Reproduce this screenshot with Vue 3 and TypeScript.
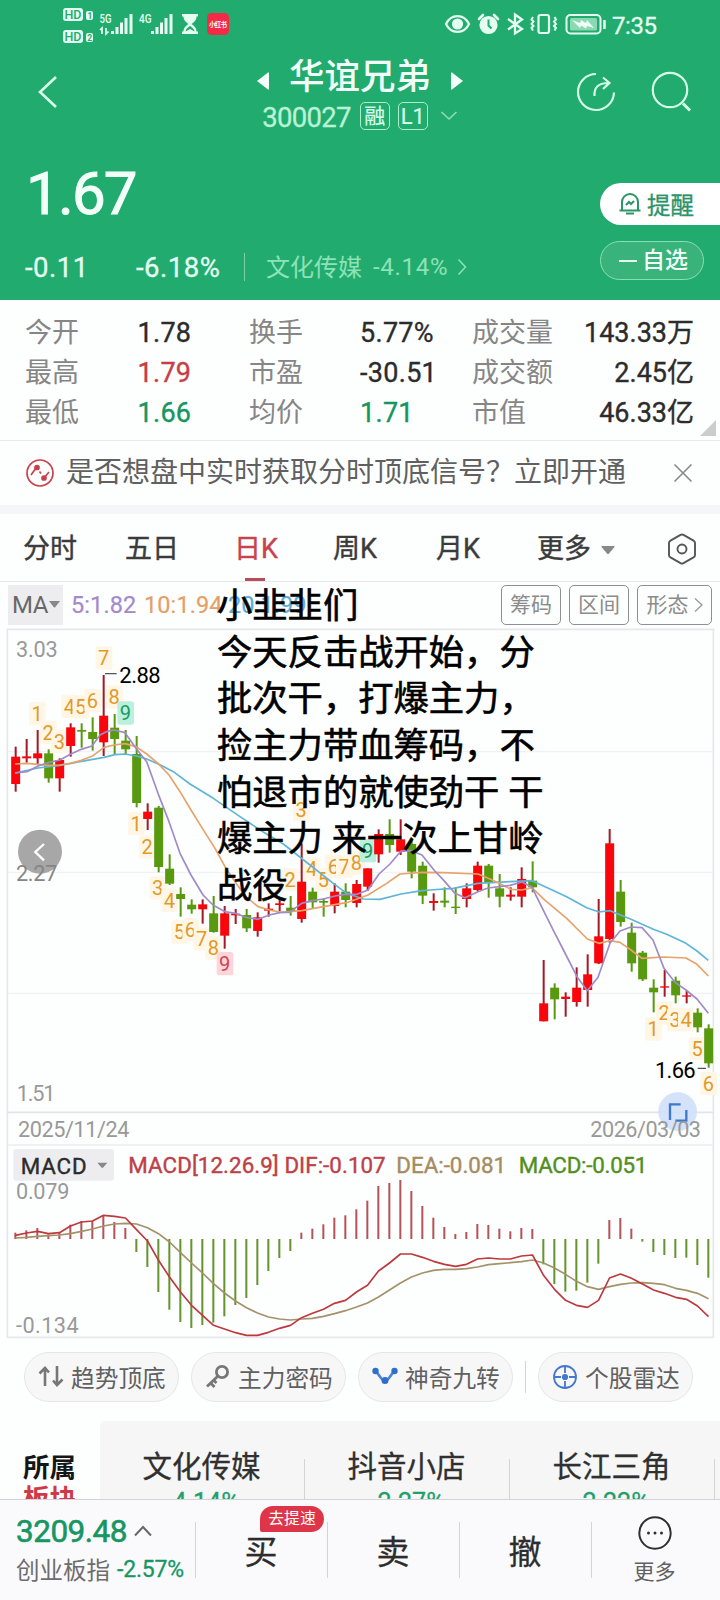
<script setup lang="ts">
type Candle = [up: number, high: number, top: number, bottom: number, low: number]
type Tag = [text: string, x: number, y: number, tone?: string]

// The chart is drawn on a grid of three units per pixel.
const X0 = 46.5
const STEP = 33
const ZERO = 1857
const cx = (i: number) => X0 + i * STEP

const candles: Candle[] = [
  [1, 380, 410, 492, 515], [1, 357, 409, 415, 428], [1, 330, 400, 415, 435], [0, 388, 400, 475, 488],
  [1, 415, 420, 475, 515], [1, 310, 322, 378, 410], [0, 310, 330, 335, 383], [0, 292, 336, 357, 392],
  [1, 165, 287, 367, 408], [0, 282, 323, 357, 402], [0, 330, 362, 388, 402], [0, 348, 402, 549, 562],
  [1, 550, 575, 597, 630], [0, 558, 563, 741, 757], [0, 703, 746, 791, 795], [0, 802, 822, 837, 890],
  [0, 838, 854, 868, 881], [1, 838, 853, 868, 911], [0, 828, 880, 936, 938], [1, 858, 880, 947, 986],
  [1, 867, 881, 886, 912], [0, 867, 885, 925, 936], [1, 877, 892, 933, 950], [1, 850, 866, 872, 890],
  [1, 837, 850, 855, 873], [0, 828, 863, 875, 887], [1, 670, 785, 897, 908], [0, 803, 815, 847, 865],
  [0, 835, 843, 848, 890], [1, 790, 815, 858, 880], [0, 790, 815, 840, 862], [1, 780, 792, 849, 862],
  [1, 745, 745, 800, 813], [1, 628, 642, 703, 728], [0, 598, 642, 675, 698], [1, 598, 658, 695, 705],
  [0, 662, 672, 755, 775], [0, 725, 737, 827, 852], [1, 820, 843, 849, 872], [0, 802, 842, 848, 862],
  [0, 802, 860, 864, 882], [1, 790, 805, 837, 862], [1, 725, 737, 810, 815], [0, 732, 737, 788, 833],
  [0, 762, 805, 830, 862], [1, 802, 824, 830, 842], [1, 742, 777, 830, 862], [0, 724, 782, 802, 817],
  [1, 1020, 1150, 1204, 1204], [0, 1090, 1103, 1138, 1198], [1, 1117, 1130, 1137, 1190], [1, 1042, 1103, 1146, 1160],
  [1, 1003, 1063, 1110, 1160], [1, 837, 949, 1030, 1032], [1, 627, 670, 957, 968], [0, 780, 815, 906, 920],
  [0, 908, 938, 1030, 1055], [0, 993, 998, 1078, 1083], [0, 1078, 1103, 1117, 1177], [1, 1050, 1099, 1103, 1130],
  [0, 1070, 1082, 1126, 1150], [1, 1113, 1126, 1130, 1150], [0, 1165, 1178, 1222, 1237], [0, 1213, 1225, 1330, 1343],
]

const ma5 = '45,459 81,455 114,438 144,428 180,420 211,403 244,388 276,378 300,345 322,334 342,330 375,338 408,385 440,425 474,520 507,605 540,700 573,765 609,825 639,855 675,875 705,880 738,892 774,898 808,885 843,877 868,877 905,850 936,842 970,837 1005,828 1035,823 1071,823 1104,810 1137,762 1170,732 1203,693 1233,692 1266,705 1302,750 1332,782 1365,820 1395,833 1434,815 1464,804 1530,796 1566,786 1596,802 1632,875 1662,935 1698,1005 1731,1070 1762,1112 1794,1072 1830,970 1860,933 1893,921 1926,923 1959,960 1992,1045 2025,1087 2058,1110 2091,1137 2125,1180'
const ma10 = '45,432 81,430 114,433 144,436 180,435 211,430 244,421 276,409 312,382 342,375 375,371 408,380 440,402 474,430 507,465 540,515 573,570 609,628 645,685 675,740 705,785 738,830 774,860 808,870 843,877 905,872 970,860 1040,848 1104,825 1160,790 1200,762 1266,757 1330,758 1434,762 1470,777 1497,790 1533,808 1566,810 1596,803 1632,838 1700,895 1762,957 1797,970 1830,962 1860,967 1893,990 1926,1015 1990,1011 2058,1014 2091,1033 2125,1068'
const ma20 = '45,459 114,444 180,436 244,424 312,412 345,404 375,402 410,408 440,417 480,434 520,455 570,492 640,535 720,590 780,630 850,672 930,735 1000,790 1040,820 1090,837 1140,838 1203,822 1266,812 1290,810 1360,805 1434,790 1530,785 1596,782 1650,807 1700,830 1760,863 1797,876 1830,872 1893,898 1960,928 2000,943 2058,970 2091,993 2125,1021'

const tags: Tag[] = [
  ['1', 111, 302], ['2', 144, 358], ['3', 178, 385], ['4', 208, 280], ['5', 242, 282], ['6', 277, 263],
  ['7', 311, 135], ['8', 342, 252], ['9', 376, 300, 'green'],
  ['1', 408, 632], ['2', 441, 702], ['3', 473, 825], ['4', 508, 862], ['5', 538, 957], ['6', 571, 950],
  ['7', 605, 978], ['8', 640, 1005], ['9', 674, 1052, 'red'],
  ['2', 870, 800], ['3', 903, 590], ['4', 935, 768], ['5', 970, 800], ['6', 1000, 760], ['7', 1032, 760],
  ['8', 1069, 750], ['9', 1103, 713, 'green'],
  ['1', 1959, 1248], ['2', 1992, 1200], ['3', 2025, 1220], ['4', 2058, 1220], ['5', 2091, 1307], ['6', 2125, 1412],
]

const hist = [
  19, 26, 33, 14, 19, 43, 54, 54, 71, 51, 33, -39, -84, -159, -212, -249, -267, -258, -251, -232, -198, -177, -138,
  -96, -57, -36, 19, 31, 44, 64, 71, 89, 115, 159, 168, 177, 144, 99, 64, 36, 15, 21, 45, 42, 31, 23, 33, 30, -76,
  -135, -158, -155, -131, -74, 57, 63, 31, -8, -39, -48, -57, -56, -78, -116,
]
const dif = [
  11, 18, 23, 16, 19, 39, 51, 54, 71, 68, 63, 28, -6, -64, -114, -159, -199, -229, -259, -270, -281, -289, -289, -280,
  -268, -259, -236, -223, -211, -193, -184, -159, -139, -96, -72, -45, -45, -55, -67, -76, -82, -76, -60, -57, -60,
  -60, -51, -48, -109, -151, -184, -199, -205, -184, -117, -105, -118, -135, -153, -163, -175, -181, -201, -233,
]
const dea = [
  3, 5, 8, 10, 12, 16, 23, 30, 39, 45, 47, 45, 34, 16, -9, -41, -72, -102, -134, -162, -186, -206, -222, -234, -240,
  -243, -240, -238, -232, -224, -215, -204, -192, -174, -153, -132, -114, -102, -94, -91, -91, -89, -84, -77, -74, -71,
  -68, -63, -72, -87, -106, -127, -143, -151, -143, -136, -132, -131, -133, -137, -148, -154, -163, -179,
]
const line = (v: number[]) => v.map((y, i) => `${cx(i)},${ZERO - y}`).join(' ')

const stats = [
  ['今开', '1.78', '', '换手', '5.77%', '', '成交量', '143.33万'],
  ['最高', '1.79', 'up', '市盈', '-30.51', '', '成交额', '2.45亿'],
  ['最低', '1.66', 'down', '均价', '1.71', 'down', '市值', '46.33亿'],
]
const tabs = ['分时', '五日', '日K', '周K', '月K']
const sectors = [['文化传媒', '-4.14%'], ['抖音小店', '-2.27%'], ['长江三角', '-2.22%']]
const note = ['小韭韭们', '今天反击战开始，分', '批次干，打爆主力，', '捡主力带血筹码，不', '怕退市的就使劲干 干', '爆主力 来一次上甘岭', '战役']
</script>

<template>
  <div class="screen">
    <header class="top">
      <svg class="status" viewBox="0 0 720 48" fill="none">
        <g fill="#e4fff1">
          <rect x="63" y="8" width="20" height="13" rx="3" /><rect x="63" y="30" width="20" height="13" rx="3" />
          <rect x="86" y="11" width="7" height="9" rx="2" /><rect x="86" y="33" width="7" height="9" rx="2" />
          <text x="99.500" y="23" font-size="12.500" font-weight="500" textLength="12" lengthAdjust="spacingAndGlyphs">5G</text>
          <text x="139" y="23" font-size="12.500" font-weight="500" textLength="12.500" lengthAdjust="spacingAndGlyphs">4G</text>
          <path d="M111 31h3v3h-3zM115.500 27h3v7h-3zM120 22.500h3v11.500h-3zM124.500 18h3v16h-3zM129.500 14h3v20h-3zM151 31h3v3h-3zM155.500 27h3v7h-3zM160 22.500h3v11.500h-3zM164.500 18h3v16h-3zM169.500 14h3v20h-3z" />
          <path d="M182 14h16v2.500h-1.500c0 4-3 6-5 7.500 2 1.500 5 3.500 5 7.500h1.500V34h-16v-2.500h1.500c0-4 3-6 5-7.500-2-1.500-5-3.500-5-7.500H182z" />
        </g>
        <path d="M185.500 31.500c.5-3 2.500-4 4.500-5.500 2 1.500 4 2.500 4.500 5.500l-4.500-2.500z" fill="#22ab6e" />
        <path d="M102 34v-6l-2 2M106 28v6l2.500-2.500" stroke="#e4fff1" stroke-width="1.700" />
        <g fill="#22ab6e" font-weight="500">
          <text x="64.500" y="19" font-size="12.500" textLength="17" lengthAdjust="spacingAndGlyphs">HD</text><text x="64.500" y="41" font-size="12.500" textLength="17" lengthAdjust="spacingAndGlyphs">HD</text>
          <text x="87.500" y="19" font-size="8.500" font-weight="700">1</text><text x="87.300" y="41" font-size="8.500" font-weight="700">2</text>
        </g>
        <rect x="207" y="13" width="22" height="22" rx="4.500" fill="#f42b46" />
        <text x="209" y="27" font-size="6.500" font-weight="700" fill="#fff" textLength="18">小红书</text>
        <g stroke="#e4fff1" stroke-width="2.200">
          <path d="M446 24c5-10.500 18-10.500 23 0-5 10.500-18 10.500-23 0z" /><circle cx="457.500" cy="24" r="4.500" fill="#e4fff1" />
          <path d="M479 19l4-4M498 19l-4-4" stroke-width="2.600" stroke-linecap="round" />
          <circle cx="488.500" cy="25" r="8" fill="#e4fff1" />
          <path d="M508 19l14 10-7 4.500v-19l7 5-14 10" stroke-width="2.300" />
          <rect x="538.500" y="15" width="10.500" height="18" rx="2" />
          <path d="M533 17l-1.500 2.500 2 2-2 2.500 2 2-2 2 1.500 2.500M554.500 17l1.500 2.500-2 2 2 2.500-2 2 2 2-1.500 2.500" stroke-width="2" />
          <rect x="566.500" y="15" width="34" height="18.500" rx="4" stroke-width="2" />
        </g>
        <path d="M488.500 19.500v6l3 3" stroke="#22ab6e" stroke-width="2" />
        <rect x="570" y="18" width="27" height="12.500" rx="1.500" fill="#8bd9b2" />
        <path d="M572 20l8 3 1-3 5 3 1-3 7 8-7-2-1 2.500-5-3-1 2.500z" fill="#effff6" />
        <path d="M604.500 20v9" stroke="#e4fff1" stroke-width="2.500" />
        <text x="612" y="33.500" font-size="24" fill="#e4fff1" stroke="#e4fff1" stroke-width=".3" textLength="45">7:35</text>
      </svg>

      <div class="nav">
        <svg class="back" width="24" height="36" viewBox="0 0 24 36"><path d="M20 3L4 18l16 15" /></svg>
        <div class="title">
          <div class="name">
            <svg width="12" height="18" viewBox="0 0 12 18"><path d="M0 9L11 .5h1v17h-1z" /></svg>
            <h1>华谊兄弟</h1>
            <svg width="12" height="18" viewBox="0 0 12 18"><path d="M12 9L1 .5H0v17h1z" /></svg>
          </div>
          <div class="code">
            <span class="num">300027</span><span class="box">融</span><span class="box l1">L1</span>
            <svg width="18" height="12" viewBox="0 0 18 12"><path d="M1.500 2L9 9l7.500-7" /></svg>
          </div>
        </div>
        <div class="actions">
          <svg width="44" height="44" viewBox="0 0 44 44"><path d="M22 4a18 18 0 1 0 18 18.500M20.500 26c-.5-8 3-13 14-13M29 7.500l6.500 5.500-6.500 6" /></svg>
          <svg width="44" height="44" viewBox="0 0 44 44"><circle cx="20" cy="20" r="17.200" /><path d="M33 33.500l7 7" stroke-width="3" /></svg>
        </div>
      </div>

      <div class="quote">
        <div>
          <div class="price">1.67</div>
          <div class="change">
            <b>-0.11</b><b>-6.18%</b><i></i><span class="trade">文化传媒</span><span class="pct">-4.14%</span>
            <svg width="10" height="18" viewBox="0 0 10 18"><path d="M1.500 1.500L8.500 9l-7 7.500" /></svg>
          </div>
        </div>
        <div class="side">
          <div class="remind">
            <svg width="24" height="24" viewBox="0 0 24 24"><path d="M4 18V10a8 8 0 0 1 16 0v8M1.500 18.500h21M8 21.500h8M8 13l3-3 2 2 3-3" /></svg>提醒
          </div>
          <div class="fav"><em></em>自选</div>
        </div>
      </div>
    </header>

    <section class="stats">
      <div v-for="r in stats" :key="r[0]" class="row">
        <span>{{ r[0] }}</span><b :class="r[2]">{{ r[1] }}</b><span>{{ r[3] }}</span><b :class="r[5]">{{ r[4] }}</b>
        <span>{{ r[6] }}</span><b class="right">{{ r[7] }}</b>
      </div>
      <div class="fold"></div>
    </section>

    <section class="promo">
      <svg width="30" height="30" viewBox="0 0 30 30" fill="none" stroke="#c9404c" stroke-width="1.700">
        <circle cx="15" cy="15" r="13" /><path d="M6 17l5-7M14.500 13.500l1.500 2M19 20l5-6" /><circle cx="12" cy="9.500" r="2" fill="#c9404c" /><circle cx="19" cy="20" r="2" fill="#c9404c" />
      </svg>
      <p>是否想盘中实时获取分时顶底信号？立即开通</p>
      <svg width="20" height="20" viewBox="0 0 20 20" stroke="#888" stroke-width="1.600"><path d="M1.500 1.500l17 17M18.500 1.500l-17 17" /></svg>
    </section>

    <nav class="tabs">
      <span v-for="t in tabs" :key="t" :class="{ on: t === '日K' }">{{ t }}</span>
      <span class="more">更多<svg width="16" height="10" viewBox="0 0 16 10"><path d="M2 1h12q1 0 .5 1L9 8.500q-1 1-2 0L1.500 2Q1 1 2 1z" fill="#888" /></svg></span>
      <svg class="hex" width="30" height="32" viewBox="0 0 30 32" fill="none" stroke="#555" stroke-width="1.900"><path d="M13.500 1.900q1.500-.8 3 0l10 5.700q1.500.9 1.500 2.500v11.800q0 1.600-1.500 2.500l-10 5.700q-1.500.8-3 0l-10-5.700Q2 23.500 2 21.900V10.100q0-1.600 1.500-2.500z" /><circle cx="15" cy="16" r="4.500" /></svg>
    </nav>

    <section class="ma">
      <div class="pick">MA<svg width="11" height="7" viewBox="0 0 11 7"><path d="M0 0h11L6 6.500H5z" fill="#888" /></svg></div>
      <div class="legend"><span class="m5">5:1.82</span><span class="m10">10:1.94</span><span class="m20">20:1.99</span></div>
      <div class="tools"><span>筹码</span><span>区间</span><span>形态<svg width="9" height="16" viewBox="0 0 9 16"><path d="M1 1.500L8 8l-7 6.500" fill="none" stroke="#999" stroke-width="1.300" /></svg></span></div>
    </section>

    <svg class="chart" viewBox="0 18 2160 2142">
      <g fill="none" stroke="#ececf0" stroke-width="4">
        <path d="M20 395H2140M20 757H2140M20 1120H2140" stroke="#f1f1f5" />
        <path d="M22 28H2140V2152H22z" stroke="#e7e7eb" stroke-width="5" />
        <path d="M20 1477H2140" stroke="#e3e3e8" stroke-width="5" /><path d="M20 1575H2140" />
      </g>
      <g v-for="(t, i) in tags" :key="'t' + i" text-anchor="middle" font-size="60">
        <rect :x="t[1] - 24" :y="t[2] - 56" width="50" height="70" rx="8" :fill="t[3] === 'green' ? '#bdf0dc' : t[3] === 'red' ? '#ffd5da' : '#fff6e6'" />
        <text :x="t[1]" :y="t[2] + 1" :fill="t[3] === 'green' ? '#199a62' : t[3] === 'red' ? '#cc4455' : '#e09a2c'">{{ t[0] }}</text>
      </g>
      <g v-for="(c, i) in candles" :key="i" :fill="c[0] ? '#f8060c' : '#59990f'">
        <rect :x="cx(i) - 2.500" :y="c[1]" width="6" :height="c[4] - c[1]" :fill="c[0] ? '#a51825' : '#59990f'" />
        <rect :x="cx(i) - 13" :y="c[2]" width="27" :height="c[3] - c[2]" />
      </g>
      <g fill="none" stroke-width="5" stroke-linejoin="round">
        <polyline :points="ma20" stroke="#5fb5d8" /><polyline :points="ma10" stroke="#e8a26b" /><polyline :points="ma5" stroke="#a08ac8" />
      </g>
      <path d="M315 161h35M2093 1345h25" stroke="#555" stroke-width="4" />
      <g fill="#999" font-size="65">
        <text x="48" y="110" textLength="125">3.03</text><text x="50" y="1444" textLength="116">1.51</text>
        <text x="54" y="1551" textLength="334">2025/11/24</text>
        <text x="48" y="1736" textLength="160">0.079</text><text x="48" y="2138" textLength="188">-0.134</text>
      </g>
      <circle cx="120" cy="695" r="66" fill="#9d9d9d" fill-opacity=".9" />
      <text x="48" y="782" textLength="124" fill="#858585" font-size="65">2.27</text>
      <path d="M132 672l-26 24 26 25" fill="none" stroke="#fff" stroke-width="7" />
      <circle cx="2033" cy="1475" r="58" fill="#cfdffa" fill-opacity=".9" />
      <path d="M2010 1500v-47h32M2059 1470v32h-33" fill="none" stroke="#3f78cf" stroke-width="7" />
      <text x="1771" y="1551" textLength="332" fill="#999" font-size="65">2026/03/03</text>
      <g fill="#000" font-size="66"><text x="358" y="188" textLength="124">2.88</text><text x="1965" y="1373" textLength="122">1.66</text></g>
      <rect x="40" y="1587" width="302" height="95" rx="9" fill="#ededf0" />
      <path d="M292 1628h30l-13 15h-4z" fill="#888" />
      <g font-size="67" stroke-width="1.200">
        <text x="62" y="1661" textLength="198" fill="#2b2b2b" stroke="#2b2b2b">MACD</text>
        <text x="385" y="1658" textLength="772" fill="#bd4146" stroke="#bd4146">MACD[12.26.9] DIF:-0.107</text>
        <text x="1189" y="1658" textLength="329" fill="#a68c61" stroke="#a68c61">DEA:-0.081</text>
        <text x="1556" y="1658" textLength="386" fill="#528f1d" stroke="#528f1d">MACD:-0.051</text>
      </g>
      <rect v-for="(h, i) in hist" :key="'h' + i" :x="cx(i) - 3.500" :y="h > 0 ? ZERO - h : ZERO" width="6" :height="Math.abs(h)" :fill="h > 0 ? '#b5525a' : '#65942f'" />
      <g fill="none" stroke-width="5" stroke-linejoin="round"><polyline :points="line(dea)" stroke="#a3926a" /><polyline :points="line(dif)" stroke="#bd393e" /></g>
    </svg>

    <section class="chips">
      <div><svg width="26" height="24" viewBox="0 0 26 24" stroke="#777"><path d="M7 21V3M1.500 8.500L7 3l4 4.500M19 1v19M15 15.500l4 4.500 5.500-5.500" /></svg>趋势顶底</div>
      <div><svg width="26" height="24" viewBox="0 0 26 24" stroke="#777"><circle cx="17" cy="7" r="5.600" stroke-width="2.800" /><path d="M12.500 11.500L2 21.500M5.500 18l4 4M8.500 15l3 3" stroke-width="2.800" /></svg>主力密码</div>
      <div><svg width="26" height="24" viewBox="0 0 26 24" stroke="#4a86d8"><path d="M4 6.500c4 4 5 9 9 9s5-5 9-9" /><g fill="#2e6fce" stroke="none"><circle cx="3.500" cy="6" r="3.200" /><circle cx="13" cy="15.500" r="3.500" /><circle cx="22.500" cy="6" r="3.200" /></g></svg>神奇九转</div>
      <i></i>
      <div><svg width="26" height="24" viewBox="0 0 26 24" stroke="#4278cf"><circle cx="13" cy="12" r="11" stroke-width="1.800" /><path d="M13 1v7M13 16v7M2 12h7M17 12h7" stroke-width="1.800" /><circle cx="13" cy="12" r="1.800" fill="#4278cf" /></svg>个股雷达</div>
    </section>

    <section class="sector">
      <div class="own"><strong>所属</strong><strong class="red">板块</strong></div>
      <div class="cells"><div v-for="s in sectors" :key="s[0]"><span>{{ s[0] }}</span><small>{{ s[1] }}</small></div></div>
    </section>

    <footer class="bar">
      <div class="index">
        <div class="big"><span>3209.48</span><svg width="18" height="12" viewBox="0 0 18 12"><path d="M1 10.500L9 2l8 8.500" fill="none" stroke="#666" stroke-width="1.900" /></svg></div>
        <div class="sub">创业板指<span>-2.57%</span></div>
      </div>
      <div class="act">买<span class="badge">去提速</span></div>
      <div class="act">卖</div>
      <div class="act">撤</div>
      <div class="etc">
        <svg width="36" height="36" viewBox="0 0 36 36"><circle cx="18" cy="18" r="15.700" fill="none" stroke="#2f2f2f" stroke-width="2" /><g fill="#2f2f2f"><circle cx="11.500" cy="18" r="1.500" /><circle cx="18" cy="18" r="1.500" /><circle cx="24.500" cy="18" r="1.500" /></g></svg>
        <span>更多</span>
      </div>
    </footer>

    <div class="note"><p v-for="n in note" :key="n">{{ n }}</p></div>
  </div>
</template>

<style>
body { margin: 0; background: #fff; }
</style>

<style scoped>
.screen { position: relative; width: 720px; height: 1600px; overflow: hidden; background: #fdfefe; font-family: Roboto, "Noto Sans CJK SC", sans-serif; display: flex; flex-direction: column; box-sizing: border-box; }
.screen * { box-sizing: border-box; }
.screen svg { flex: none; }
b { font-weight: 500; }
.top { height: 300px; flex: none; background: #22ab6e; color: #f1fff8; }
.status { display: block; width: 720px; height: 48px; }
.nav { height: 102px; display: grid; grid-template-columns: 200px 320px 200px; }
.back { margin: 26px 0 0 36px; fill: none; stroke: #d9ffec; stroke-width: 2.600; }
.title { display: flex; flex-direction: column; align-items: center; }
.name { display: flex; align-items: center; justify-content: center; gap: 20px; height: 56px; padding-top: 2px; fill: #f1fff8; }
.name h1 { margin: 0; font-size: 35.500px; line-height: 50px; font-weight: 500; white-space: nowrap; }
.name svg { margin-top: 8px; }
.code { display: flex; align-items: center; height: 28px; margin: -2px 0 0 0; color: #b9f3d5; }
.num { font-size: 27.500px; letter-spacing: -.7px; margin: 2px 9px 0 0; -webkit-text-stroke: .3px; }
.box { width: 30px; height: 28px; border: 1px solid #a9edca; border-radius: 5px; font-size: 21px; line-height: 26px; text-align: center; margin-right: 8px; color: #d9ffec; -webkit-text-stroke: .2px; }
.box.l1 { font-size: 22px; line-height: 27px; }
.code svg { margin-left: 4px; fill: none; stroke: #8fddb6; stroke-width: 1.600; }
.actions { display: flex; padding: 22px 0 0 54px; gap: 32px; fill: none; stroke: #d4ffe8; stroke-width: 2.200; }
.quote { display: flex; justify-content: space-between; height: 150px; }
.price { height: 86px; padding: 1px 0 0 26px; font-size: 60px; line-height: 86px; letter-spacing: -1.800px; font-weight: 400; -webkit-text-stroke: 1px; }
.change { display: grid; grid-template-columns: 111px 108px 22px 107px 84px 10px; align-items: center; padding-left: 25px; height: 62px; color: #8de2b7; font-size: 24px; }
.change b { font-size: 27.500px; letter-spacing: .5px; font-weight: 400; color: #e6fff3; -webkit-text-stroke: .3px; }
.change i { width: 1px; height: 28px; background: #7ccfa5; }
.change .trade { margin-top: -3px; }
.change .pct { letter-spacing: .7px; }
.change svg { fill: none; stroke: #8de2b7; stroke-width: 1.500; }
.side { width: 120px; padding-top: 33px; }
.remind { height: 42px; border-radius: 21px 0 0 21px; background: #fff; color: #2b9468; display: flex; align-items: center; padding-left: 18px; gap: 5px; font-size: 23.500px; white-space: nowrap; -webkit-text-stroke: .3px; }
.remind svg { fill: none; stroke: #2b9468; stroke-width: 2; }
.fav { margin-top: 16px; width: 104px; height: 39px; border: 1px solid #86e0b4; border-radius: 20px; background: #39b37a; display: flex; align-items: center; gap: 5px; padding-left: 18px; font-size: 23px; line-height: 37px; font-weight: 500; white-space: nowrap; }
.fav em { width: 18px; height: 2px; background: #e8fff3; }
.stats { position: relative; flex: none; height: 141px; padding: 12px 26px 0 25px; border-bottom: 1px solid #e9e9ec; }
.row { height: 40px; display: grid; grid-template-columns: 112.500px 111.500px 111px 112px 90px 1fr; align-items: center; font-size: 27px; line-height: 40px; color: #868686; white-space: nowrap; }
.row b { font-weight: 400; color: #2c2c2c; letter-spacing: .3px; padding-top: 1px; -webkit-text-stroke: .35px; }
.row b.up { color: #c73e45; }
.row b.down { color: #16965f; }
.row .right { justify-self: end; letter-spacing: 0; }
.fold { position: absolute; right: 4px; bottom: 4px; width: 16px; height: 16px; background: #ccc; clip-path: polygon(100% 0, 100% 100%, 0 100%); }
.promo { flex: none; height: 73px; padding: 0 27px 0 25px; display: flex; align-items: center; border-bottom: 9px solid #f5f6f7; }
.promo p { margin: 0 auto 0 11px; font-size: 28px; line-height: 40px; color: #606060; white-space: nowrap; }
.tabs { flex: none; height: 68px; padding: 2px 0 0 23px; display: grid; grid-template-columns: 102px 109px 99px 103px 101px 130px 30px; align-items: center; border-bottom: 1px solid #e8e8eb; font-size: 27px; color: #3b3b3b; line-height: 65px; }
.tabs span { height: 65px; padding-top: 1px; -webkit-text-stroke: .4px; white-space: nowrap; }
.tabs .on { color: #c84250; background: linear-gradient(#b94d5a, #b94d5a) 11px 100% / 20px 3px no-repeat; }
.more svg { margin-left: 9px; vertical-align: 3px; }
.ma { flex: none; height: 44px; padding: 3px 8px 0 8px; display: flex; align-items: flex-start; white-space: nowrap; }
.pick { width: 55px; height: 40px; background: #ededef; color: #686868; font-size: 24px; line-height: 41px; padding-left: 4px; letter-spacing: -.5px; }
.pick svg { vertical-align: 5px; margin-left: 1px; }
.legend { display: flex; font-size: 23.500px; line-height: 41px; margin-left: 8px; -webkit-text-stroke: .2px; letter-spacing: .1px; }
.legend span { width: 73px; }
.legend .m10 { width: 84px; }
.m5 { color: #a48acb; } .m10 { color: #e5a067; } .m20 { color: #5aaed8; }
.tools { margin-left: auto; display: flex; gap: 8px; }
.tools span { width: 60px; height: 40px; border: 1px solid #8f8f92; border-radius: 5px; text-align: center; font-size: 21px; line-height: 39px; color: #8c8c8c; }
.tools span:last-child { width: 75px; }
.tools svg { margin-left: 5px; vertical-align: -1px; }
.chart { display: block; width: 720px; height: 714px; }
.chips { flex: none; height: 81px; padding: 12px 0 0 24px; display: flex; gap: 12px; }
.chips div { width: 155px; height: 50px; border: 1px solid #e6e6e9; border-radius: 25px; background: #f7f7f8; display: flex; align-items: center; padding-left: 13px; gap: 7px; font-size: 23.700px; color: #606060; white-space: nowrap; }
.chips svg { fill: none; stroke-width: 2.600; }
.chips i { width: 1px; height: 32px; margin-top: 9px; background: #d4d4d8; }
.sector { flex: none; height: 78px; overflow: hidden; display: flex; }
.own { width: 100px; padding: 31px 0 0 23px; font-size: 26.500px; line-height: 31px; color: #161616; white-space: nowrap; }
.own strong { display: block; }
.own .red { color: #d33846; }
.cells { flex: none; width: 620px; height: 78px; background: #f6f6f7; border-radius: 5px 0 0 0; display: flex; }
.cells div { position: relative; width: 205px; flex: none; text-align: center; background: linear-gradient(#d4d4d6, #d4d4d6) 100% 38px / 1px 60px no-repeat; }
.cells span { display: block; margin: 26px 2px 0 0; font-size: 29.500px; line-height: 41px; color: #303030; -webkit-text-stroke: .3px; }
.cells small { display: block; margin-top: 1px; font-size: 25px; line-height: 28px; color: #21a06b; -webkit-text-stroke: .3px; }
.bar { flex: none; height: 101px; border-top: 1px solid #d3d3d6; background: #fafafc; display: flex; }
.index { width: 195px; padding-left: 16px; color: #179663; white-space: nowrap; }
.big { height: 44px; margin-top: 9px; display: flex; align-items: center; gap: 7px; font-size: 31.500px; letter-spacing: -.5px; -webkit-text-stroke: .6px; }
.sub { height: 32px; display: flex; align-items: center; font-size: 23.500px; color: #6d6d6d; }
.sub span { margin-left: 7px; font-size: 23px; letter-spacing: -.2px; color: #179663; -webkit-text-stroke: .3px; }
.act { position: relative; width: 132px; padding-top: 29px; line-height: 48px; font-size: 33px; color: #2d2d2d; text-align: center; -webkit-text-stroke: .3px; background: linear-gradient(#d4d4d7, #d4d4d7) 0 22px / 1px 56px no-repeat; }
.badge { position: absolute; left: 65px; top: 6px; width: 64px; height: 26px; background: #df3548; color: #fff; border-radius: 13px 13px 13px 2px; font-size: 15.800px; line-height: 26px; -webkit-text-stroke: 0; }
.etc { width: 127px; padding-top: 15px; display: flex; flex-direction: column; align-items: center; font-size: 21px; color: #606060; background: linear-gradient(#d4d4d7, #d4d4d7) 0 22px / 1px 56px no-repeat; }
.etc span { line-height: 30px; margin-top: 6px; }
.note { position: absolute; left: 217px; top: 583px; color: #000; font-size: 35.300px; line-height: 46.670px; -webkit-text-stroke: .6px; white-space: nowrap; }
.note p { margin: 0; }
</style>
